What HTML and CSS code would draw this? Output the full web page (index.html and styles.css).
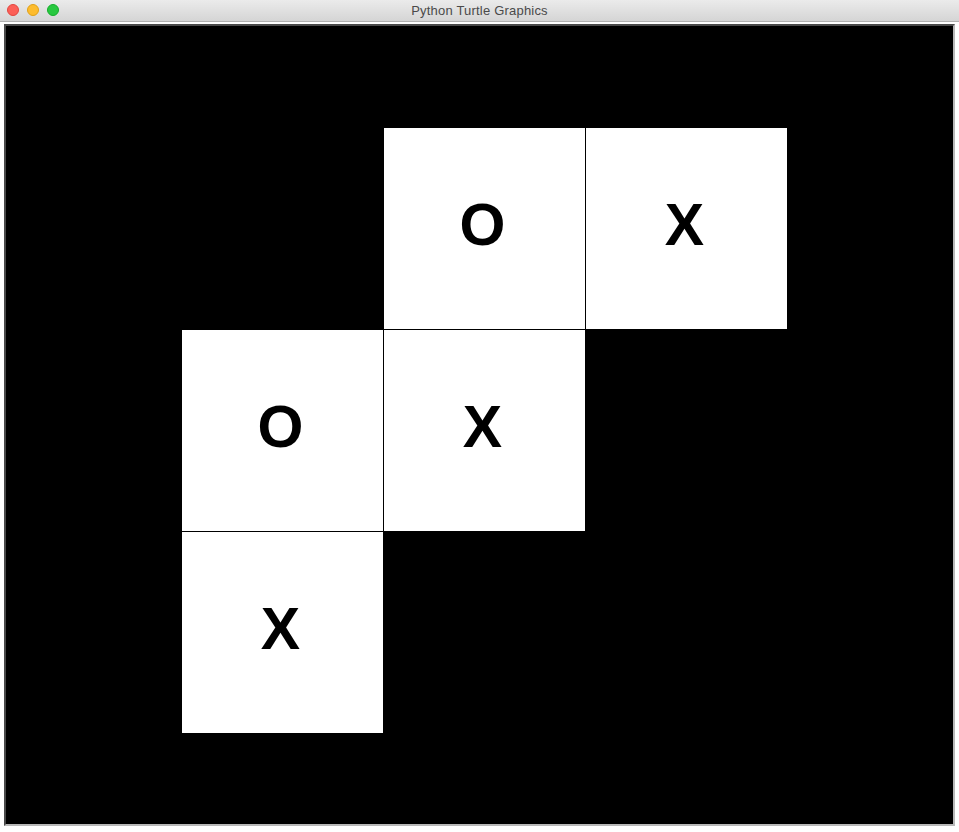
FILE: index.html
```html
<!DOCTYPE html>
<html>
<head>
<meta charset="utf-8">
<link rel="stylesheet" href="styles.css">
</head>
<body>
<div class="window">
  <div class="titlebar">
    <div class="lights">
      <span class="light red"></span>
      <span class="light yellow"></span>
      <span class="light green"></span>
    </div>
    <div class="title">Python Turtle Graphics</div>
  </div>
  <div class="body">
    <div class="canvas">
      <div class="board">
        <div class="cell empty"></div>
        <div class="cell">O</div>
        <div class="cell">X</div>
        <div class="cell">O</div>
        <div class="cell">X</div>
        <div class="cell empty"></div>
        <div class="cell">X</div>
        <div class="cell empty"></div>
        <div class="cell empty"></div>
      </div>
    </div>
  </div>
</div>
</body>
</html>
```
FILE: styles.css
```css
html, body {
  margin: 0;
  padding: 0;
  width: 959px;
  height: 832px;
  overflow: hidden;
  background: #ffffff;
}
.window {
  display: flex;
  flex-direction: column;
  width: 959px;
  height: 832px;
}
.titlebar {
  position: relative;
  height: 21px;
  flex: none;
  background: linear-gradient(#ebebeb, #d5d5d5);
  border-bottom: 1px solid #b1b1b1;
  display: flex;
  align-items: center;
  justify-content: center;
}
.lights {
  position: absolute;
  left: 7px;
  top: 4px;
  display: flex;
  gap: 8px;
}
.light {
  width: 12px;
  height: 12px;
  border-radius: 50%;
  box-sizing: border-box;
}
.red { background: #fc5f57; border: 1px solid #e2463f; }
.yellow { background: #fdbc2e; border: 1px solid #e1a116; }
.green { background: #28c840; border: 1px solid #14ae2a; }
.title {
  font-family: "Liberation Sans", Arial, sans-serif;
  font-size: 13px;
  letter-spacing: 0.2px;
  color: #4a4a4a;
}
.body {
  flex: 1;
  padding: 2px 4px 6px 4px;
  background: #ffffff;
}
.canvas {
  box-sizing: border-box;
  width: 951px;
  height: 802px;
  background: #000000;
  border-top: 2px solid #4a4a4a;
  border-left: 2px solid #4a4a4a;
  border-right: 2px solid #b8b8b8;
  border-bottom: 2px solid #b8b8b8;
  padding: 102px 0 0 176px;
}
.board {
  display: grid;
  grid-template-columns: repeat(3, 201px);
  grid-template-rows: repeat(3, 201px);
  gap: 1px;
}
.cell {
  background: #ffffff;
  display: flex;
  align-items: center;
  justify-content: center;
  font-family: "Liberation Sans", Arial, sans-serif;
  font-weight: bold;
  font-size: 59px;
  color: #000000;
  padding: 0 4px 8px 0;
  box-sizing: border-box;
}
.cell.empty {
  background: transparent;
}
```
